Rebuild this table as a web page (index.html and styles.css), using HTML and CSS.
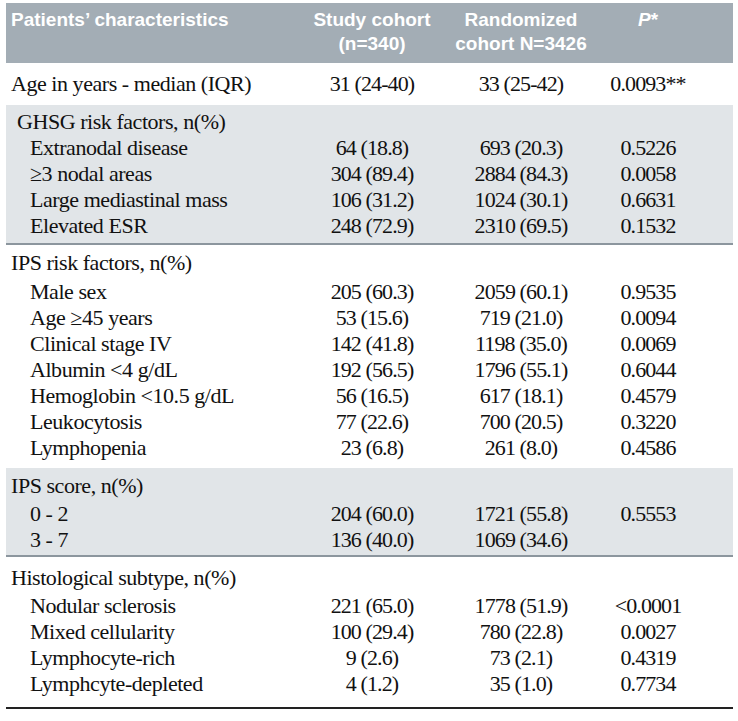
FILE: index.html
```html
<!DOCTYPE html>
<html lang="en">
<head>
<meta charset="utf-8">
<title>Patients' characteristics</title>
<link rel="stylesheet" href="styles.css">
</head>
<body>
<div class="page">
<table class="chars">
  <colgroup>
    <col class="c-label"><col class="c-study"><col class="c-rand"><col class="c-p">
  </colgroup>
  <thead>
    <tr>
      <th class="lbl">Patients’ characteristics</th>
      <th>Study cohort<br>(n=340)</th>
      <th>Randomized<br>cohort N=3426</th>
      <th class="pcol"><i>P</i>*</th>
    </tr>
  </thead>
  <tbody class="sec sec-age">
    <tr class="first last"><td class="lbl">Age in years - median (IQR)</td><td>31 (24-40)</td><td>33 (25-42)</td><td class="pcol">0.0093**</td></tr>
  </tbody>
  <tbody class="sec shaded ruled sec-ghsg">
    <tr class="first"><td class="lbl head ghsg">GHSG risk factors, n(%)</td><td></td><td></td><td class="pcol"></td></tr>
    <tr><td class="lbl sub">Extranodal disease</td><td>64 (18.8)</td><td>693 (20.3)</td><td class="pcol">0.5226</td></tr>
    <tr><td class="lbl sub">≥3 nodal areas</td><td>304 (89.4)</td><td>2884 (84.3)</td><td class="pcol">0.0058</td></tr>
    <tr><td class="lbl sub">Large mediastinal mass</td><td>106 (31.2)</td><td>1024 (30.1)</td><td class="pcol">0.6631</td></tr>
    <tr class="last"><td class="lbl sub">Elevated ESR</td><td>248 (72.9)</td><td>2310 (69.5)</td><td class="pcol">0.1532</td></tr>
  </tbody>
  <tbody class="sec sec-ips">
    <tr class="first"><td class="lbl head">IPS risk factors, n(%)</td><td></td><td></td><td class="pcol"></td></tr>
    <tr><td class="lbl sub">Male sex</td><td>205 (60.3)</td><td>2059 (60.1)</td><td class="pcol">0.9535</td></tr>
    <tr><td class="lbl sub">Age ≥45 years</td><td>53 (15.6)</td><td>719 (21.0)</td><td class="pcol">0.0094</td></tr>
    <tr><td class="lbl sub">Clinical stage IV</td><td>142 (41.8)</td><td>1198 (35.0)</td><td class="pcol">0.0069</td></tr>
    <tr><td class="lbl sub">Albumin &lt;4 g/dL</td><td>192 (56.5)</td><td>1796 (55.1)</td><td class="pcol">0.6044</td></tr>
    <tr><td class="lbl sub">Hemoglobin &lt;10.5 g/dL</td><td>56 (16.5)</td><td>617 (18.1)</td><td class="pcol">0.4579</td></tr>
    <tr><td class="lbl sub">Leukocytosis</td><td>77 (22.6)</td><td>700 (20.5)</td><td class="pcol">0.3220</td></tr>
    <tr class="last"><td class="lbl sub">Lymphopenia</td><td>23 (6.8)</td><td>261 (8.0)</td><td class="pcol">0.4586</td></tr>
  </tbody>
  <tbody class="sec shaded ruled sec-score">
    <tr class="first"><td class="lbl head">IPS score, n(%)</td><td></td><td></td><td class="pcol"></td></tr>
    <tr><td class="lbl sub">0 - 2</td><td>204 (60.0)</td><td>1721 (55.8)</td><td class="pcol">0.5553</td></tr>
    <tr class="last"><td class="lbl sub">3 - 7</td><td>136 (40.0)</td><td>1069 (34.6)</td><td class="pcol"></td></tr>
  </tbody>
  <tbody class="sec final">
    <tr class="first"><td class="lbl head">Histological subtype, n(%)</td><td></td><td></td><td class="pcol"></td></tr>
    <tr><td class="lbl sub">Nodular sclerosis</td><td>221 (65.0)</td><td>1778 (51.9)</td><td class="pcol">&lt;0.0001</td></tr>
    <tr><td class="lbl sub">Mixed cellularity</td><td>100 (29.4)</td><td>780 (22.8)</td><td class="pcol">0.0027</td></tr>
    <tr><td class="lbl sub">Lymphocyte-rich</td><td>9 (2.6)</td><td>73 (2.1)</td><td class="pcol">0.4319</td></tr>
    <tr class="last"><td class="lbl sub">Lymphcyte-depleted</td><td>4 (1.2)</td><td>35 (1.0)</td><td class="pcol">0.7734</td></tr>
  </tbody>
</table>
</div>
</body>
</html>
```

FILE: styles.css
```css
html, body {
  margin: 0;
  padding: 0;
  background: #ffffff;
}

.page {
  padding: 3px 5px 0 6px;
}

.chars {
  width: 727px;
  table-layout: fixed;
  border-collapse: collapse;
  font-family: "Liberation Serif", "Times New Roman", serif;
  font-size: 22px;
  color: #111111;
}

.c-label { width: 292px; }
.c-study { width: 148px; }
.c-rand { width: 150px; }
.c-p { width: 137px; }

.chars th {
  background: #a3adb5;
  color: #ffffff;
  font-family: "Liberation Sans Narrow", "Liberation Sans", Arial, sans-serif;
  font-weight: bold;
  font-size: 19px;
  line-height: 24px;
  padding: 5px 0 7px 0;
  text-align: center;
  vertical-align: top;
  white-space: nowrap;
}

.chars th.lbl {
  text-align: left;
  padding-left: 5px;
}

.chars td {
  padding: 0;
  line-height: 26px;
  text-align: center;
  white-space: nowrap;
  letter-spacing: -0.9px;
}

.chars td.lbl {
  text-align: left;
  padding-left: 5px;
  letter-spacing: -0.45px;
}

.chars .pcol {
  padding-right: 33px;
}

.chars td.ghsg {
  padding-left: 11px;
}

.chars td.sub {
  padding-left: 24px;
}

.sec tr.first td {
  padding-top: 8px;
  padding-bottom: 2px;
}

.sec tr.last td {
  padding-bottom: 7px;
}

.sec-age tr.first td {
  padding-top: 8px;
  padding-bottom: 8px;
}

.sec-ghsg tr.first td {
  padding-top: 4px;
  padding-bottom: 0;
}

.sec-ghsg tr.last td {
  padding-bottom: 4px;
}

.sec-ips tr.first td {
  padding-top: 5px;
  padding-bottom: 3px;
}

.sec-score tr.first td {
  padding-top: 5px;
  padding-bottom: 2px;
}

.sec-score tr.last td {
  padding-bottom: 2px;
}

.shaded td {
  background: #e1e5e8;
}

.final tr.first td {
  padding-top: 8px;
  padding-bottom: 2px;
}

.final tr.last td {
  padding-bottom: 10px;
}

.ruled tr.last td {
  border-bottom: 2px solid #8c969e;
}

.final tr.last td {
  border-bottom: 2px solid #222222;
}
```
